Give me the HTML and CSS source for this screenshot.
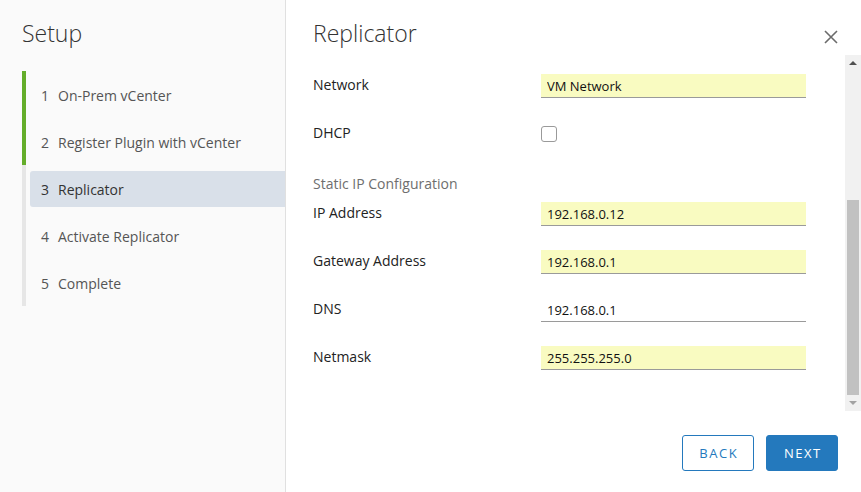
FILE: index.html
```html
<!DOCTYPE html>
<html lang="en">
<head>
<meta charset="utf-8">
<title>Setup - Replicator</title>
<link rel="stylesheet" href="styles.css">
</head>
<body>
<div class="wizard">
  <aside class="sidebar">
    <h1 class="sidebar-title">Setup</h1>
    <ol class="steps">
      <li class="step done"><div class="step-inner"><span class="num">1</span><span>On-Prem vCenter</span></div></li>
      <li class="step done"><div class="step-inner"><span class="num">2</span><span>Register Plugin with vCenter</span></div></li>
      <li class="step current"><div class="step-inner"><span class="num">3</span><span>Replicator</span></div></li>
      <li class="step"><div class="step-inner"><span class="num">4</span><span>Activate Replicator</span></div></li>
      <li class="step"><div class="step-inner"><span class="num">5</span><span>Complete</span></div></li>
    </ol>
  </aside>
  <main class="main">
    <header class="header">
      <h2 class="title">Replicator</h2>
      <button class="close" aria-label="Close">
        <svg width="14" height="14" viewBox="0 0 14 14"><path d="M1 1 L13 13 M13 1 L1 13" stroke="#6b6b6b" stroke-width="1.6" fill="none"/></svg>
      </button>
    </header>
    <div class="body">
      <div class="scroll">
        <form class="form">
          <div class="scrolled-past"></div>
          <div class="row"><label class="label">Network</label><input class="field filled" value="VM Network"></div>
          <div class="row"><label class="label">DHCP</label><input type="checkbox" class="check"></div>
          <div class="section">Static IP Configuration</div>
          <div class="row first"><label class="label">IP Address</label><input class="field filled" value="192.168.0.12"></div>
          <div class="row"><label class="label">Gateway Address</label><input class="field filled" value="192.168.0.1"></div>
          <div class="row"><label class="label">DNS</label><input class="field" value="192.168.0.1"></div>
          <div class="row"><label class="label">Netmask</label><input class="field filled" value="255.255.255.0"></div>
        </form>
      </div>
      <div class="scrollbar" aria-hidden="true">
        <div class="sb-btn"><span class="arrow-up"></span></div>
        <div class="sb-track"><div class="sb-thumb"></div></div>
        <div class="sb-btn"><span class="arrow-down"></span></div>
      </div>
    </div>
    <footer class="footer">
      <button class="btn btn-outline">Back</button>
      <button class="btn btn-primary">Next</button>
    </footer>
  </main>
</div>
</body>
</html>
```
FILE: styles.css
```css
* { box-sizing: border-box; }
html, body { margin: 0; padding: 0; height: 100%; }
body {
  font-family: "Open Sans", "Liberation Sans", sans-serif;
  color: #333;
  background: #fff;
  overflow: hidden;
}
.wizard {
  display: flex;
  height: 100vh;
}
.sidebar {
  width: 286px;
  flex-shrink: 0;
  background: #fafafa;
  border-right: 1px solid #e0e0e0;
  padding: 18px 0 0 22px;
}
.sidebar-title {
  margin: 0;
  font-size: 23px;
  font-weight: 300;
  line-height: 30px;
  color: #333;
}
.steps {
  list-style: none;
  margin: 23px 0 0 0;
  padding: 0;
  border-left: 4px solid #e6e6e6;
}
.step {
  height: 47px;
  padding: 6px 0 5px 0;
  margin-left: -4px;
  border-left: 4px solid transparent;
}
.step.done { border-left-color: #64ad2a; }
.step-inner {
  display: flex;
  align-items: center;
  height: 36px;
  padding-left: 11px;
  margin-left: 4px;
  font-size: 14px;
  color: #555;
  border-radius: 3px 0 0 3px;
}
.step.current .step-inner {
  background: #d9e0e9;
  color: #333;
}
.num {
  width: 17px;
  flex-shrink: 0;
}
.main {
  flex: 1;
  display: flex;
  flex-direction: column;
  min-width: 0;
}
.header {
  height: 55px;
  flex-shrink: 0;
  display: flex;
  justify-content: space-between;
  align-items: flex-start;
  padding: 18px 23px 0 27px;
}
.title {
  margin: 0;
  font-size: 23px;
  font-weight: 300;
  line-height: 30px;
  color: #333;
}
.close {
  margin-top: 12px;
  padding: 0;
  border: 0;
  background: none;
  width: 14px;
  height: 14px;
  display: block;
}
.close svg { display: block; }
.body {
  flex: 1;
  min-height: 0;
  display: flex;
}
.scroll {
  flex: 1;
  min-width: 0;
  overflow: hidden;
  display: flex;
  flex-direction: column-reverse;
}
.scrollbar {
  width: 16px;
  flex-shrink: 0;
  background: #f1f1f1;
  display: flex;
  flex-direction: column;
}
.sb-btn {
  height: 16px;
  flex-shrink: 0;
  display: flex;
  align-items: center;
  justify-content: center;
}
.arrow-up {
  width: 0;
  height: 0;
  border-left: 4px solid transparent;
  border-right: 4px solid transparent;
  border-bottom: 4px solid #505050;
}
.arrow-down {
  width: 0;
  height: 0;
  border-left: 4px solid transparent;
  border-right: 4px solid transparent;
  border-top: 4px solid #a3a3a3;
}
.sb-track {
  flex: 1;
  display: flex;
  flex-direction: column;
  justify-content: flex-end;
  padding: 0 2px;
}
.sb-thumb {
  height: 195px;
  background: #c1c1c1;
}
.form {
  flex-shrink: 0;
  padding: 0 0 41px 27px;
}
.scrolled-past { height: 229px; }
.row {
  display: flex;
  align-items: center;
  height: 24px;
  margin-top: 24px;
}
.row.first { margin-top: 8px; }
.label {
  width: 228px;
  flex-shrink: 0;
  font-size: 14px;
  color: #222;
  margin-top: -3px;
}
.field {
  width: 265px;
  height: 24px;
  border: 0;
  border-bottom: 1px solid #9a9a9a;
  background: #fff;
  padding: 0 6px;
  font-family: "Open Sans", "Liberation Sans", sans-serif;
  font-size: 13px;
  color: #111;
  outline: none;
}
.field.filled { background: #f9fbc1; }
.check {
  appearance: none;
  -webkit-appearance: none;
  margin: 0;
  width: 16px;
  height: 16px;
  border: 1px solid #9a9a9a;
  border-radius: 3px;
  background: #fff;
}
.section {
  margin-top: 28px;
  line-height: 20px;
  font-size: 14px;
  color: #6e6e6e;
}
.footer {
  height: 81px;
  flex-shrink: 0;
  display: flex;
  justify-content: flex-end;
  align-items: flex-start;
  gap: 12px;
  padding: 24px 23px 0 0;
}
.btn {
  width: 72px;
  height: 36px;
  border-radius: 3px;
  border: 1px solid #2479bd;
  font-family: "Open Sans", "Liberation Sans", sans-serif;
  font-size: 13px;
  letter-spacing: 1.5px;
  text-transform: uppercase;
  padding: 0 0 0 1.5px;
}
.btn-outline { background: #fff; color: #2479bd; }
.btn-primary { background: #2479bd; color: #fff; }
```
